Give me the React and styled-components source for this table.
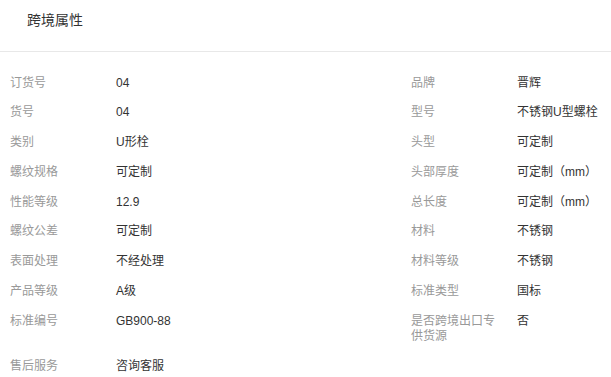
import React from "react";
import styled, { createGlobalStyle } from "styled-components";

const Global = createGlobalStyle`
  html, body { margin: 0; padding: 0; background: #fff; }
  body { font-family: "Liberation Sans", "Noto Sans CJK SC", sans-serif; }
`;

const Panel = styled.div`
  width: 611px;
  background: #fff;
`;

const Header = styled.div`
  height: 51px;
  box-sizing: content-box;
  border-bottom: 1px solid #e8e8e8;
  padding-left: 27px;
  display: flex;
  align-items: flex-start;
`;

const Title = styled.h3`
  margin: 11px 0 0;
  font-size: 14px;
  font-weight: normal;
  line-height: 18px;
  color: #333;
`;

const Grid = styled.div`
  display: grid;
  grid-template-columns: 401px 1fr;
  row-gap: 14.8px;
  padding: 23.5px 0 20px 10px;
`;

const Item = styled.div`
  display: flex;
  align-items: flex-start;
  font-size: 12px;
  line-height: 15px;
`;

const Label = styled.div`
  width: 90px;
  flex: 0 0 90px;
  margin-right: 16px;
  color: #999;
`;

const Value = styled.div`
  color: #333;
  white-space: nowrap;
`;

const rows = [
  [["订货号", "04"], ["品牌", "晋辉"]],
  [["货号", "04"], ["型号", "不锈钢U型螺栓"]],
  [["类别", "U形栓"], ["头型", "可定制"]],
  [["螺纹规格", "可定制"], ["头部厚度", "可定制（mm）"]],
  [["性能等级", "12.9"], ["总长度", "可定制（mm）"]],
  [["螺纹公差", "可定制"], ["材料", "不锈钢"]],
  [["表面处理", "不经处理"], ["材料等级", "不锈钢"]],
  [["产品等级", "A级"], ["标准类型", "国标"]],
  [["标准编号", "GB900-88"], ["是否跨境出口专供货源", "否"]],
  [["售后服务", "咨询客服"], null],
];

export default function App() {
  return (
    <>
      <Global />
      <Panel>
        <Header>
          <Title>跨境属性</Title>
        </Header>
        <Grid>
          {rows.map((r, i) =>
            r.map((cell, j) =>
              cell ? (
                <Item key={`${i}-${j}`}>
                  <Label>{cell[0]}</Label>
                  <Value>{cell[1]}</Value>
                </Item>
              ) : (
                <div key={`${i}-${j}`} />
              )
            )
          )}
        </Grid>
      </Panel>
    </>
  );
}
